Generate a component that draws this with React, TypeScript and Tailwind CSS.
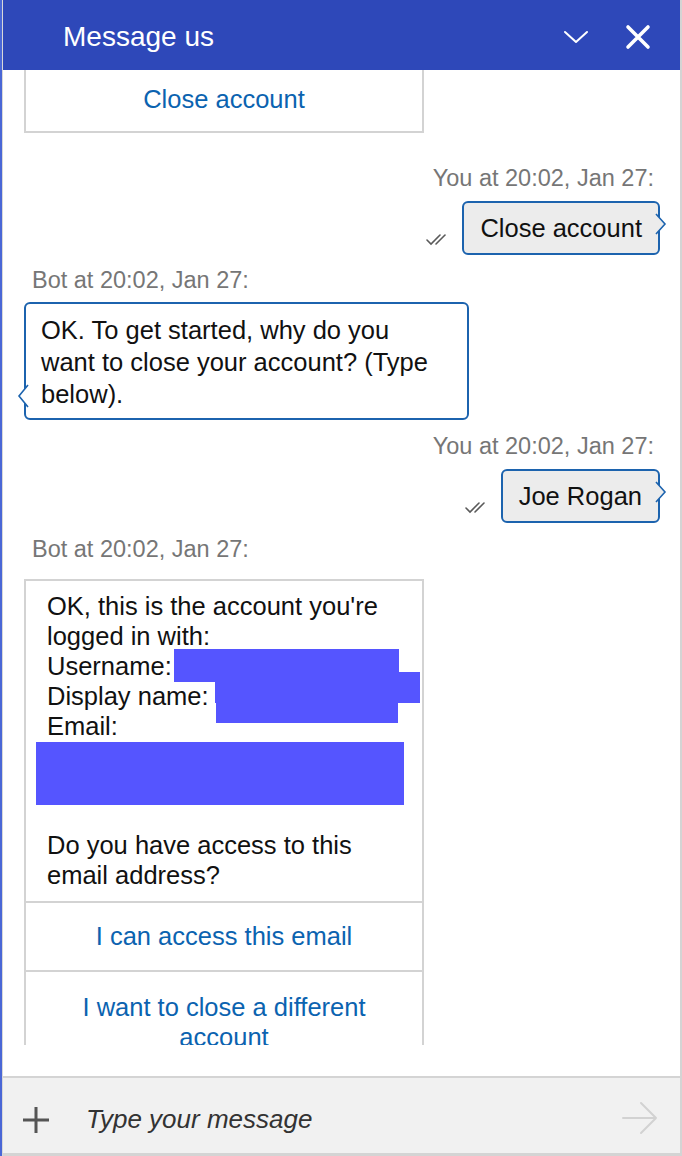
import React from 'react'

const LINK = 'text-[#0b63b0]'

function Ticks() {
  return (
    <svg viewBox="0 0 26 14" className="mb-[9px] h-[14px] w-[26px]" fill="none" stroke="#5a5a5a" strokeWidth={1.6} strokeLinecap="round" aria-hidden="true">
      <path d="M1 8 L5 12 L14 3" />
      <path d="M10 12 L19 3" />
    </svg>
  )
}

function UserBubble({ text, mt }: { text: string; mt: string }) {
  return (
    <div className={`flex flex-col items-end pr-[20px] ${mt}`}>
      <div className="pr-[6px] text-[23.5px] leading-[24px] text-[#767676]">You at 20:02, Jan 27:</div>
      <div className="mt-[11px] flex items-end gap-[10px]">
        <Ticks />
        <div className="relative flex h-[54px] items-center rounded-[6px] border-2 border-[#1c63ae] bg-[#ececec] px-[16px] text-[25.5px] text-[#111]">
          {text}
          <svg viewBox="0 0 10 20" className="absolute left-[calc(100%-2px)] top-[11px] h-[20px] w-[10px] overflow-visible" aria-hidden="true">
            <path d="M0 0 L9 10 L0 20 Z" fill="#ececec" />
            <path d="M0 0 L9 10 L0 20" fill="none" stroke="#1c63ae" strokeWidth={1.6} />
          </svg>
        </div>
      </div>
    </div>
  )
}

function BotLabel({ mt }: { mt: string }) {
  return (
    <div className={`pl-[29px] text-[23.5px] leading-[24px] text-[#767676] ${mt}`}>Bot at 20:02, Jan 27:</div>
  )
}

function Redact({ className }: { className: string }) {
  return <div className={`absolute bg-[#5555ff] ${className}`} />
}

export default function App() {
  return (
    <div className="flex h-[1156px] w-[682px] overflow-hidden bg-white font-['Liberation_Sans',Arial,sans-serif]">
      <div className="w-[2px] bg-[#4a67d6]" />
      <div className="w-[1px] bg-[#d8d8d8]" />
      <div className="flex min-w-0 flex-1 flex-col">
        {/* header */}
        <div className="flex h-[70px] shrink-0 items-center bg-[#2e48b9] pl-[60px] pr-[29px] pt-[3px] text-white">
          <span className="flex-1 text-[28px]">Message us</span>
          <svg viewBox="0 0 26 16" className="mr-[36px] h-[16px] w-[26px]" fill="none" stroke="#ffffff" strokeWidth={2} strokeLinecap="round" strokeLinejoin="round" aria-hidden="true">
            <path d="M2 3 L13 13 L24 3" />
          </svg>
          <svg viewBox="0 0 26 26" className="h-[26px] w-[26px]" fill="none" stroke="#ffffff" strokeWidth={3.6} strokeLinecap="round" aria-hidden="true">
            <path d="M3 3 L23 23 M23 3 L3 23" />
          </svg>
        </div>

        {/* messages */}
        <div className="flex min-h-0 flex-1 flex-col pb-[31px]">
          <div className="min-h-0 flex-1 overflow-hidden">
            <div className="ml-[21px] flex h-[63px] w-[400px] items-center justify-center border-x-2 border-b-2 border-[#d3d3d3] pb-[3px]">
              <span className={`text-[25.5px] ${LINK}`}>Close account</span>
            </div>

            <UserBubble text="Close account" mt="mt-[33px]" />

            <BotLabel mt="mt-[13px]" />
            <div className="relative ml-[21px] mt-[10px] w-[445px] rounded-[6px] border-2 border-[#1c63ae] bg-white pb-[8px] pl-[15px] pr-[30px] pt-[10px] text-[25.5px] leading-[32px] text-[#111]">
              OK. To get started, why do you want to close your account? (Type below).
              <svg viewBox="0 0 10 22" className="absolute right-[calc(100%-2px)] top-[81px] h-[22px] w-[10px] overflow-visible" aria-hidden="true">
                <path d="M10 0 L1 11 L10 22 Z" fill="#ffffff" />
                <path d="M10 0 L1 11 L10 22" fill="none" stroke="#1c63ae" strokeWidth={1.6} />
              </svg>
            </div>

            <UserBubble text="Joe Rogan" mt="mt-[14px]" />

            <BotLabel mt="mt-[14px]" />
            <div className="relative ml-[21px] mt-[18px] w-[400px] border-2 border-[#d3d3d3] text-[25.5px]">
              <div className="pb-[11px] pl-[21px] pr-[10px] pt-[10px] leading-[30px] text-[#111]">
                <div>OK, this is the account you're</div>
                <div>logged in with:</div>
                <div>Username:</div>
                <div>Display name:</div>
                <div>Email:</div>
                <div className="h-[63px]" />
                <div className="mt-[26px]">Do you have access to this email address?</div>
              </div>
              <Redact className="left-[148px] top-[68px] h-[33px] w-[225px]" />
              <Redact className="left-[189px] top-[91px] h-[31px] w-[205px]" />
              <Redact className="left-[190px] top-[91px] h-[51px] w-[182px]" />
              <Redact className="left-[10px] top-[161px] h-[63px] w-[368px]" />
              <div className={`flex h-[69px] items-center justify-center border-t-2 border-[#d3d3d3] ${LINK}`}>
                I can access this email
              </div>
              <div className={`border-t-2 border-[#d3d3d3] px-[20px] pt-[20px] text-center leading-[30px] ${LINK}`}>
                I want to close a different account
              </div>
            </div>
          </div>
        </div>

        {/* composer */}
        <div className="flex h-[80px] shrink-0 items-center border-b-[3px] border-t-2 border-[#d4d4d4] bg-[#f1f1f1] pl-[19px] pr-[22px] pt-[4px]">
          <svg viewBox="0 0 28 28" className="mt-[4px] h-[28px] w-[28px]" fill="none" stroke="#555555" strokeWidth={3} aria-hidden="true">
            <path d="M14 1 V27 M1 14 H27" />
          </svg>
          <span className="ml-[36px] mt-[4px] flex-1 text-[26px] italic text-[#333]">Type your message</span>
          <svg viewBox="0 0 36 34" className="h-[34px] w-[36px]" fill="none" stroke="#d2d2d2" strokeWidth={2} strokeLinecap="round" strokeLinejoin="round" aria-hidden="true">
            <path d="M1 17 H34 M19 2 L34 17 L19 32" />
          </svg>
        </div>
      </div>
      <div className="w-[2px] bg-[#d4d4d4]" />
    </div>
  )
}
